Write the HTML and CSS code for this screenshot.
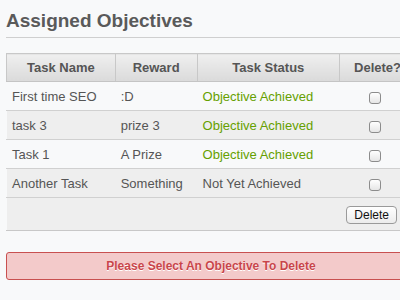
FILE: index.html
```html
<!DOCTYPE html>
<html>
<head>
<meta charset="utf-8">
<link rel="stylesheet" href="styles.css">
</head>
<body>
<div class="page">
  <h1 class="title">Assigned Objectives</h1>
  <hr class="rule">
  <table class="tasks">
    <colgroup>
      <col class="c1"><col class="c2"><col class="c3"><col class="c4">
    </colgroup>
    <thead>
      <tr><th>Task Name</th><th>Reward</th><th>Task Status</th><th>Delete?</th></tr>
    </thead>
    <tbody>
      <tr><td>First time SEO</td><td>:D</td><td class="ok">Objective Achieved</td><td class="chk"><input type="checkbox" class="box"></td></tr>
      <tr class="alt"><td>task 3</td><td>prize 3</td><td class="ok">Objective Achieved</td><td class="chk"><input type="checkbox" class="box"></td></tr>
      <tr><td>Task 1</td><td>A Prize</td><td class="ok">Objective Achieved</td><td class="chk"><input type="checkbox" class="box"></td></tr>
      <tr class="alt"><td>Another Task</td><td>Something</td><td>Not Yet Achieved</td><td class="chk"><input type="checkbox" class="box"></td></tr>
    </tbody>
    <tfoot>
      <tr><td colspan="4" class="foot"><button class="btn">Delete</button></td></tr>
    </tfoot>
  </table>
  <div class="error">Please Select An Objective To Delete</div>
</div>
</body>
</html>
```
FILE: styles.css
```css
html, body {
  margin: 0;
  padding: 0;
  overflow: hidden;
  background: #f8f9fa;
}
.page {
  width: 410px;
  padding: 0 0 0 6px;
  font-family: "Liberation Sans", Arial, sans-serif;
  color: #555;
}
.title {
  margin: 0;
  padding-top: 10px;
  font-size: 19px;
  line-height: 22px;
  font-weight: bold;
  color: #5a5a5a;
}
.rule {
  margin: 5px 0 0 0;
  border: 0;
  border-top: 1px solid #cfcfcf;
  width: 410px;
}
.tasks {
  margin-top: 15px;
  width: 410px;
  border-collapse: collapse;
  border: 1px solid #c8c8c8;
  font-size: 13px;
}
.c1 { width: 109px; }
.c2 { width: 82px; }
.c3 { width: 143px; }
.c4 { width: 76px; }
.tasks th {
  height: 27px;
  padding: 0;
  font-weight: bold;
  color: #555;
  text-align: center;
  background: linear-gradient(#efefef, #dadada);
  border-left: 1px solid #c8c8c8;
  border-bottom: 1px solid #c4c4c4;
}
.tasks td {
  height: 28px;
  padding: 0 0 0 5px;
  color: #555;
  background: #f8f9fa;
  border-bottom: 1px solid #d0d0d0;
  border-left: 1px solid transparent;
}
.tasks tr.alt td {
  background: #eeeeee;
}
.tasks td.ok {
  color: #66a000;
}
.tasks td.chk {
  padding: 0;
  text-align: center;
}
.box {
  appearance: none;
  -webkit-appearance: none;
  display: inline-block;
  width: 12px;
  height: 12px;
  margin: 2px 6px 0 0;
  border: 1px solid #8c8c8c;
  border-radius: 3px;
  background: linear-gradient(#ffffff, #e6e6e6);
  vertical-align: middle;
}
.tasks td.foot {
  height: 32px;
  padding: 0 18px 0 0;
  text-align: right;
  background: #eeeeee;
  border-bottom: 1px solid #c8c8c8;
}
.btn {
  font-family: "Liberation Sans", Arial, sans-serif;
  font-size: 12px;
  color: #111;
  height: 18px;
  padding: 0 7px;
  border: 1px solid #9a9a9a;
  border-radius: 4px;
  background: linear-gradient(#ffffff, #ececec);
  line-height: 16px;
  margin-top: 2px;
}
.error {
  margin-top: 21px;
  height: 26px;
  line-height: 26px;
  width: 408px;
  border: 1px solid #c85050;
  border-radius: 3px;
  background: #f3caca;
  color: #c9454a;
  font-size: 12px;
  font-weight: bold;
  text-align: center;
  text-shadow: 0 1px 0 #ffffff;
}
```
